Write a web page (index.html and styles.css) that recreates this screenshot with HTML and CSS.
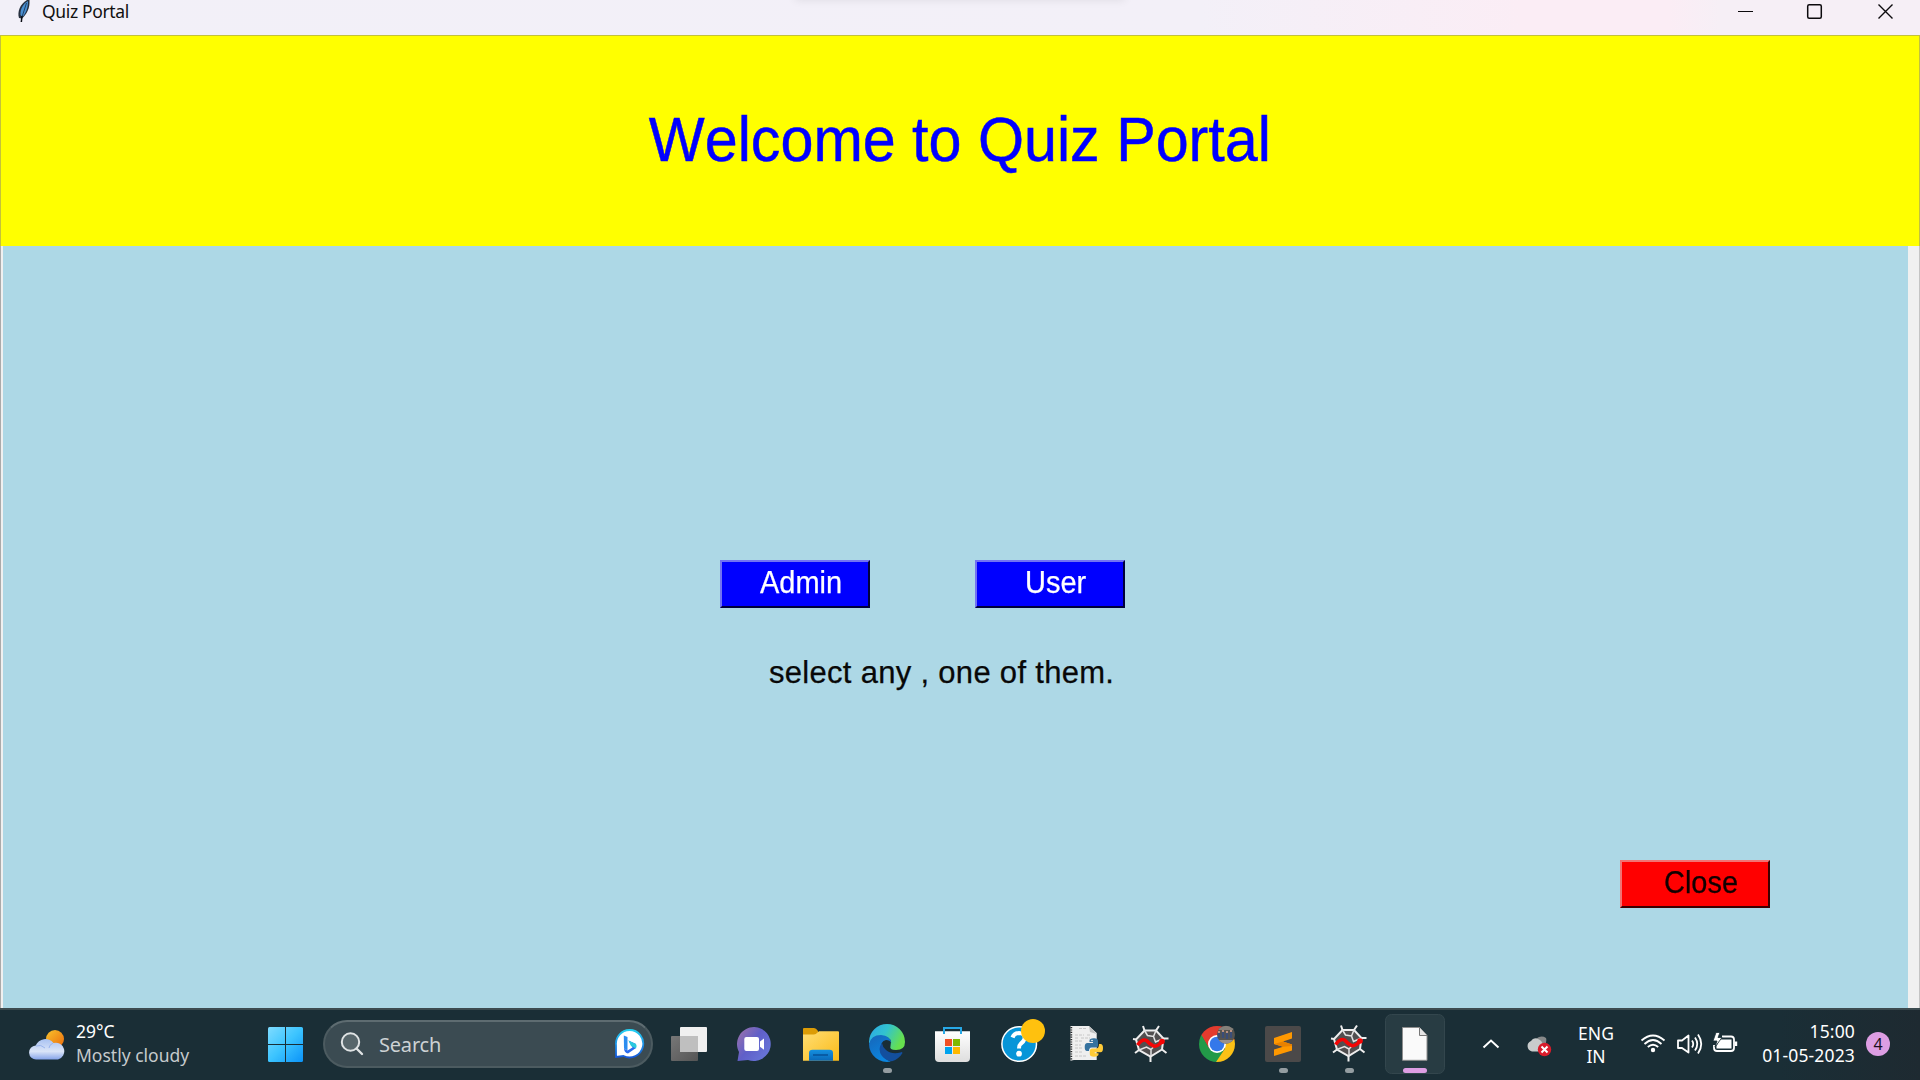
FILE: index.html
```html
<!DOCTYPE html>
<html lang="en">
<head>
<meta charset="utf-8">
<title>Quiz Portal</title>
<link rel="stylesheet" href="styles.css">
</head>
<body>
<header class="titlebar">
  <svg class="feather" width="16" height="24" viewBox="0 0 16 24"><path d="M3 18C1 12 4 4 11 0H13.500C14 8 11 14 6 18.500Z" fill="#26303f"/><path d="M4.500 15C4 9 7 4 12 1C12 8 10 13 6.500 17Z" fill="#4a8fd0"/><path d="M10.500 3L6 17" stroke="#1d3f66" stroke-width="1"/><path d="M6 16L5.300 22" stroke="#0a0d14" stroke-width="1.500"/></svg>
  <span class="window-title">Quiz Portal</span>
  <span class="tab-shadow"></span>
  <svg class="controls" width="170" height="35" viewBox="0 0 170 35" fill="none" stroke="#0c0a0d"><path d="M8 11.500H23"/><rect x="77.700" y="4.700" width="13.600" height="13.600" rx="1.500" stroke-width="1.500"/><path d="M148.500 4.500L162.500 18.500M162.500 4.500L148.500 18.500" stroke-width="1.400"/></svg>
</header>
<section class="banner"><h1>Welcome to Quiz Portal</h1></section>
<main class="panel">
  <div class="choices">
    <button class="btn admin"><span>Admin</span></button>
    <button class="btn user"><span>User</span></button>
  </div>
  <p class="hint">select any , one of them.</p>
  <button class="btn close"><span>Close</span></button>
</main>
<footer class="taskbar">
  <div class="weather">
    <svg width="37" height="32" viewBox="0 0 37 32">
      <defs><linearGradient id="sun" x1="0" y1="0" x2="1" y2="1"><stop stop-color="#f8c32c"/><stop offset="1" stop-color="#ec6a0c"/></linearGradient><linearGradient id="cl" x1="0" y1="0" x2="0" y2="1"><stop stop-color="#a9c2f2"/><stop offset=".6" stop-color="#dbe5f8"/><stop offset="1" stop-color="#86a4ea"/></linearGradient></defs>
      <circle cx="26" cy="10" r="9" fill="url(#sun)"/><path d="M7.500 30.500a7 7 0 0 1-.8-14A10.500 10.500 0 0 1 24.500 14A8.500 8.500 0 1 1 29 30.500Z" fill="url(#cl)"/><path d="M7 17q5-2 9 2M24 14q-4 2-4 5" fill="none" stroke="#9ab5ee"/>
    </svg>
    <div class="weather-text"><span>29°C</span><span class="dim">Mostly cloudy</span></div>
  </div>
  <svg class="start" width="36" height="36" viewBox="0 0 36 36">
    <defs><linearGradient id="win" x1="0" y1="0" x2="1" y2="1"><stop stop-color="#7fdcff"/><stop offset=".5" stop-color="#3cc4ff"/><stop offset="1" stop-color="#0b93f8"/></linearGradient><mask id="wm"><path d="M0 0h17v17H0zM18 0h17v17H18zM0 18h17v17H0zM18 18h17v17H18z" fill="#fff"/></mask></defs>
    <rect width="35" height="35" rx="1.500" fill="url(#win)" mask="url(#wm)"/>
  </svg>
  <div class="search">
    <svg width="24" height="24" viewBox="0 0 24 24" fill="none" stroke="#dfe3e4" stroke-width="2"><circle cx="10.500" cy="10" r="8.700" fill="#57666b"/><path d="M16.500 16.500L22 22" stroke-width="2.400" stroke-linecap="round"/></svg>
    <span>Search</span>
    <svg class="bing" width="31" height="32" viewBox="0 0 31 32"><defs><linearGradient id="bg" x1="0" y1="0" x2="0" y2="1"><stop stop-color="#24d0f2"/><stop offset="1" stop-color="#1557d8"/></linearGradient></defs><path d="M15.500 2A13.700 13.700 0 1 1 9.500 28L2 29V17A13.700 13.700 0 0 1 15.500 2Z" fill="#fff" stroke="url(#bg)" stroke-width="1.800"/><path d="M9.800 7.500L13.500 9V22.500L10 20.500Z" fill="#2a8cf0"/><path d="M10 20.500L13.500 22.500L18.500 19.500L14.500 12.500L22 16V20L14 25.500Q10.500 25 10 20.500Z" fill="#296bee"/><path d="M14.500 12.500L22 16Q23.500 18.500 22 20.500L17 18Z" fill="#2bc9de"/></svg>
  </div>
  <nav class="apps">
    <svg viewBox="0 0 66 70"><defs><linearGradient id="tv" x1="0" y1="0" x2="1" y2="1"><stop stop-color="#777"/><stop offset="1" stop-color="#555"/></linearGradient></defs><rect x="24" y="17" width="27" height="25" rx="1" fill="#f0f0f0"/><rect x="15" y="26" width="27" height="25" rx="1" fill="url(#tv)"/><path d="M24 26H42V42H24Z" fill="#bfbfbf"/></svg>
    <svg viewBox="0 0 66 70"><defs><linearGradient id="ch" x1=".1" y1=".1" x2=".9" y2=".7"><stop stop-color="#946fae"/><stop offset=".5" stop-color="#605fc8"/><stop offset="1" stop-color="#6672d6"/></linearGradient></defs><path d="M32.200 17A17 17 0 1 1 26 50L15.500 51L17 42A17 17 0 0 1 32.200 17Z" fill="url(#ch)"/><rect x="22.300" y="27" width="14.700" height="14" rx="2" fill="#fff"/><path d="M38 31.500L42 28.500V39.800L38 36.800Z" fill="#fff"/></svg>
    <svg viewBox="0 0 66 70"><defs><linearGradient id="fo" x1="0" y1="0" x2="1" y2="1"><stop stop-color="#ffde74"/><stop offset="1" stop-color="#fbbb18"/></linearGradient><linearGradient id="fb" x1="0" y1="0" x2="0" y2="1"><stop stop-color="#1591e0"/><stop offset="1" stop-color="#0a68b8"/></linearGradient></defs><path d="M15 19Q15 18 16 18H26Q28 18 30 21L30 25H15Z" fill="#dc9c06"/><path d="M15 24.500H26Q28 24.500 31 21.300H50Q51 21.300 51 22.500V50.700H15Z" fill="url(#fo)"/><path d="M21 50.700V43Q21 39.700 24.500 39.700H41.500Q45 39.700 45 43V50.700Z" fill="url(#fb)"/><path d="M25 45H40" stroke="#07539b" stroke-width="1.600"/></svg>
    <svg viewBox="0 0 66 70"><defs><linearGradient id="e1" x1="0" y1="0" x2="1" y2=".4"><stop stop-color="#2aa7e8"/><stop offset=".5" stop-color="#32c3cf"/><stop offset="1" stop-color="#66e04e"/></linearGradient><linearGradient id="e2" x1="0" y1="0" x2=".5" y2="1"><stop stop-color="#1765b8"/><stop offset="1" stop-color="#0b86e0"/></linearGradient></defs><path d="M15 32A18 18 0 0 1 51 32Q51 40 42 40Q35 40 36.500 36Q39 28 30 26Q20 25 15 34Z" fill="url(#e1)"/><path d="M15 34Q17 25 27 25Q36 25.500 37.500 33Q36 30 32 30Q26 31 27 40Q30 50 37 51.500A18 18 0 0 1 15 34Z" fill="url(#e2)"/><path d="M28 33Q23 39 28 46Q32 51 38 51.300Q45 49 48.500 43Q48 41.500 46.500 42.500Q38 45 32 40Q28.500 37 28 33Z" fill="#134f9e"/><rect x="29" y="58" width="9" height="5" rx="2.500" fill="#949da1"/></svg>
    <svg viewBox="0 0 66 70"><defs><linearGradient id="st" x1="0" y1="0" x2="0" y2="1"><stop stop-color="#fff"/><stop offset="1" stop-color="#dedede"/></linearGradient></defs><path d="M15 21.300H50V48Q50 52 46 52H19Q15 52 15 48Z" fill="url(#st)"/><path d="M24 24V18H41V24" fill="none" stroke="#27a8e6" stroke-width="2"/><path d="M25 29h7v7h-7z" fill="#f15025"/><path d="M33 29h7v7h-7z" fill="#7fb900"/><path d="M25 37h7v7h-7z" fill="#00a3ee"/><path d="M33 37h7v7h-7z" fill="#feb800"/></svg>
    <svg viewBox="0 0 66 70"><circle cx="33.200" cy="34" r="17.300" fill="#0795d8" stroke="#fff" stroke-width="1.500"/><path d="M26.500 27.500Q28 23 33 23Q39.500 23.500 38.500 29Q37.500 32 34.500 34Q33 35.200 33 38.500" fill="none" stroke="#fff" stroke-width="4"/><circle cx="33" cy="43.700" r="2.900" fill="#fff"/><circle cx="47" cy="21" r="12" fill="#ffc10e"/></svg>
    <svg viewBox="0 0 66 70"><path d="M18.500 16H37L44.700 23V50H22L18.500 50.700Z" fill="#efefef"/><path d="M37 16L38 22L44.700 24Z" fill="#bfc1c1"/><path d="M19.300 17V50" stroke="#25282a" stroke-width="1.800" stroke-dasharray="1.200 1.200"/><path d="M27 18.500h7M23 25h9M35 25h4M23 28h4M29 28h9M23 31h8M23 35h6M23 38h8M23 42h7M23 46h12" stroke="#c6c6c6" stroke-width="1" stroke-dasharray="3 1"/><path d="M41.500 28.300Q46 28 46 31V35Q46 37.500 43.500 37.500H39.500Q37 37.500 37 41H35Q32.700 41 32.700 37Q32.700 33 35.500 33H41V32H37.500V30.500Q37.500 28.500 41.500 28.300Z" fill="#35729f"/><path d="M42 46.700Q37.800 46.700 37.800 44V41Q37.800 38.500 40 38.500H44.500Q47 38 47 34H49Q51 34.500 51 38Q51 42.300 48.500 42.300H42.700V43.300H46.500V44.500Q46.200 46.500 42 46.700Z" fill="#ffcb38"/><circle cx="40" cy="30.500" r=".8" fill="#fff"/></svg>
    <svg viewBox="0 0 66 70"><defs><g id="web"><path d="M27 20.500L38.500 20.500L46 28.500L44.500 39.500L33 46.500L21.500 40L18.500 29.500Z" fill="#514f50" stroke="#eee" stroke-width="2"/><path d="M25.500 16L27 20.500M38.500 20.500L41.500 16M15.500 29L18.500 29.500M46 28.500L51 28.500M17.500 43L21.500 40M44.500 39.500L49 43M33 46.500V52" stroke="#eee" stroke-width="2"/><path d="M27 20.500L30 25.500L36 26.500L38.500 20.500M36 26.500L38 32L46 28.500M21.500 40L29 37L33.500 39.500V46.500M33.500 39.500L38 35" fill="none" stroke="#e4e4e4" stroke-width="1.500"/><path d="M20 35Q25 28.500 29 30.500Q32 34 36 36Q40 37 44 32" fill="none" stroke="#f40505" stroke-width="3.500"/><circle cx="44.500" cy="31.500" r="2.800" fill="#f40505"/></g></defs><use href="#web" x="-.5"/></svg>
    <svg viewBox="0 0 66 70"><defs><clipPath id="cc"><circle cx="33" cy="34" r="18"/></clipPath><clipPath id="pc"><circle cx="42" cy="24.700" r="9"/></clipPath></defs><g clip-path="url(#cc)"><path d="M15 16H51V30H33L25 38.500L15 22Z" fill="#e33b2e"/><path d="M15 20L17.500 25L25.200 38.500L33 42L41 38.500L33 52H15Z" fill="#229a48"/><path d="M33 29.500H51V52H32L41 38.500Z" fill="#fbc116"/></g><circle cx="33" cy="34" r="9" fill="#fff"/><circle cx="33" cy="34" r="7.300" fill="#3478ea"/><g clip-path="url(#pc)"><path d="M33 15H51V34H33Z" fill="#56544f"/><path d="M33 16H51V20H33Z" fill="#85807a"/><path d="M35 23v5M39 22v6M43 23v6M47 22v6" stroke="#3a4d78" stroke-width="2.400"/><path d="M35 21v2M39 20v2M43 21v2M47 20v2" stroke="#b99080" stroke-width="2"/><path d="M35 30H49V34H35Z" fill="#98908c"/></g></svg>
    <svg viewBox="0 0 66 70"><rect x="15" y="16" width="36" height="36" rx="2" fill="#4b4949"/><path d="M24 28L42 22V28.500L33 31.500L42 34.500V40.500L24 46V39.500L33 36.700L24 34Z" fill="#ff9800"/><path d="M24 34L33 31.500L42 34.500V36L33 36.700Z" fill="#e98100"/><rect x="29" y="58" width="9" height="5" rx="2.500" fill="#949da1"/></svg>
    <svg viewBox="0 0 66 70"><use href="#web" x="-.5" y="-.5"/><rect x="29" y="58" width="9" height="5" rx="2.500" fill="#949da1"/></svg>
    <svg viewBox="0 0 66 70"><rect x="3.500" y="4.500" width="59" height="59" rx="6" fill="#283c43" stroke="#33464d"/><path d="M20.500 17.500H37.500L45 25.500V50.300H20.500Z" fill="#fafafa" stroke="#8e8e8e"/><path d="M37.500 17.500V25.500H45" fill="#e5e5e5" stroke="#777"/><rect x="21" y="58" width="24" height="5" rx="2.500" fill="#dd9ee3"/></svg>
  </nav>
  <svg class="tray" width="107" height="70" viewBox="-7 0 107 70"><path d="M23.500 37.500L31 30.500L38.500 37.500" fill="none" stroke="#fff" stroke-width="2"/><path d="M74 32A8 8 0 0 1 86 28Q87 30 85 36L76 40Z" fill="#87898a"/><path d="M72 41.500A5.500 5.500 0 0 1 71 31Q74 26 80 30Q84 33 84 41.500Z" fill="#c9cccc"/><circle cx="84.500" cy="39.500" r="6.700" fill="#d91c2b"/><path d="M81.500 36.500l6 6M87.500 36.500l-6 6" stroke="#fff" stroke-width="2"/></svg>
  <div class="lang"><span>ENG</span><span>IN</span></div>
  <svg class="tray" width="110" height="70" viewBox="0 0 110 70" fill="none" stroke="#fff" stroke-width="1.800"><path d="M1.500 30.500Q13 20.500 24.500 30.500M4.500 34Q13 26 21.500 34M7.800 37Q13 32.500 18.200 37"/><circle cx="13" cy="40" r="2.200" fill="#fff" stroke="none"/><path d="M38 30.500H42L48.500 25.500V42.500L42 38H38Z" stroke-linejoin="round"/><path d="M52 30.500Q54.500 34 52 37.500M55 27.500Q59.500 34 55 40.500M58 24.500Q64.500 34 58 43.500"/><path d="M82 26.500H91Q94 26.500 94 29.500V38Q94 41 91 41H77Q74 41 74 38V35"/><path d="M80 29.500H91.500V38.500H76.500V36Z" fill="#fff" stroke="none"/><path d="M96 31.500V36" stroke-width="2.400"/><path d="M76 22.500L73 31H77L75 37L82 27.500H78L80 22.500Z" fill="#fff" stroke="#1a2e36" stroke-width=".8"/></svg>
  <div class="clock"><span>15:00</span><span>01-05-2023</span></div>
  <span class="badge">4</span>
</footer>
</body>
</html>
```
FILE: styles.css
```css
* { box-sizing: border-box; }
body {
  margin: 0;
  width: 1920px;
  height: 1080px;
  overflow: hidden;
  display: flex;
  flex-direction: column;
  font-family: "Liberation Sans", Arial, sans-serif;
  background: #f0f0f0;
}
.titlebar {
  position: relative;
  height: 35px;
  display: flex;
  align-items: flex-start;
  padding: 0 20px 0 16px;
  background: linear-gradient(90deg, #f2f0f8 0, #f3f0f8 1200px, #fbedf5 1520px, #fbedf5 1670px, #f6eff6 1720px, #f6eff6 100%);
}
.feather { flex: none; }
.window-title {
  margin-left: 10px;
  font: 17.5px/22px "Noto Sans", sans-serif;
  letter-spacing: -0.35px;
  color: #111;
}
.controls { margin-left: auto; }
.tab-shadow {
  position: absolute;
  left: 795px;
  top: -12px;
  width: 330px;
  height: 10px;
  box-shadow: 0 2px 10px rgba(0, 0, 0, 0.09);
}
.banner {
  height: 211px;
  background: #ff0;
  border: 1px solid #c3c13c;
  border-bottom: 0;
  display: flex;
  justify-content: center;
  padding-top: 67px;
}
.banner h1 {
  margin: 0;
  font-weight: 400;
  font-size: 63px;
  line-height: 72px;
  font-kerning: none;
  transform: scaleX(0.94);
  color: #00f;
  -webkit-text-stroke: 0.5px #00f;
  white-space: nowrap;
}
.panel {
  height: 762px;
  margin: 0 12px 0 3px;
  background: #add8e6;
  padding-top: 314px;
  box-shadow: -2px 0 #f0f0f0, -3px 0 #aaa, 11px 0 #f0f0f0, 12px 0 #c4c4c4;
}
.choices {
  display: flex;
  gap: 105px;
  padding-left: 717px;
}
.btn {
  display: block;
  width: 150px;
  height: 48px;
  border: 2px solid;
  border-radius: 0;
  font: 31.5px/34px "Liberation Sans", Arial, sans-serif;
  text-align: left;
  white-space: nowrap;
}
.btn span {
  display: block;
  transform: scaleX(0.92);
  transform-origin: left;
  -webkit-text-stroke: 0.25px;
}
.admin, .user {
  background: #00f;
  color: #fff;
  border-color: #7373f2 #00003c #00003c #7373f2;
}
.admin { padding: 0 0 4px 38px; }
.user { padding: 0 0 4px 48px; }
.hint {
  margin: 47px 0 0 766px;
  font-size: 31px;
  line-height: 36px;
  font-kerning: none;
  letter-spacing: 0.3px;
  color: #080808;
  -webkit-text-stroke: 0.25px;
  white-space: nowrap;
}
.close {
  margin: 169px 0 0 1617px;
  padding: 0 0 4px 42px;
  background: #f00;
  color: #100;
  border-color: #f27373 #3c0000 #3c0000 #f27373;
}
.taskbar {
  height: 72px;
  border-top: 2px solid #3c4b50;
  background: linear-gradient(90deg, #1a2e36 0, #1a2e36 1780px, #1e2a31 1920px);
  display: flex;
  align-items: flex-start;
  font-family: "Noto Sans", sans-serif;
  font-size: 17.5px;
  color: #fff;
}
.weather { display: flex; width: 268px; padding: 19px 0 0 29px; }
.weather-text, .lang, .clock { display: flex; flex-direction: column; line-height: 24px; white-space: nowrap; }
.weather-text { margin: -10px 0 0 10px; }
.dim { color: #c5cacc; }
.start { margin-top: 17px; }
.search {
  width: 330px;
  height: 48px;
  margin: 10px 3px 0 19px;
  border: 2px solid #4c5b60;
  border-top-color: #5e6c71;
  border-radius: 24px;
  background: #3b4b52;
  display: flex;
  align-items: center;
  padding: 0 6px 0 15px;
  font-size: 20px;
  color: #cdd2d4;
}
.search span { margin-left: 15px; letter-spacing: -0.2px; }
.bing { margin-left: auto; }
.apps { display: flex; }
.apps svg { width: 66px; height: 70px; }
.start, .tray, .search, .apps svg { flex: none; }
.tray { margin-left: 5px; }
.lang { width: 71px; margin-top: 12px; align-items: center; padding-left: 1px; line-height: 23px; }
.lang + .tray { margin-left: 9px; }
.clock { width: 105px; margin-top: 9px; align-items: flex-end; letter-spacing: 0.15px; }
.badge {
  width: 24px;
  height: 24px;
  margin: 22px 0 0 11px;
  border-radius: 50%;
  background: #dd9ee3;
  color: #1b1020;
  font-size: 16px;
  line-height: 24px;
  text-align: center;
}
```
